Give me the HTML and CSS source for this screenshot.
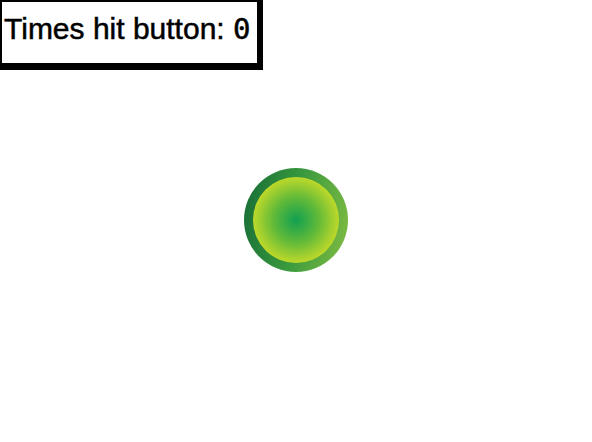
FILE: index.html
```html
<!DOCTYPE html>
<html>
<head>
<meta charset="utf-8">
<link rel="stylesheet" href="styles.css">
</head>
<body>
<div class="stage">
  <div class="counter">Times hit button: <span class="num">0</span></div>
  <div class="button"><div class="button-core"></div></div>
</div>
</body>
</html>
```
FILE: styles.css
```css
html, body {
  margin: 0;
  padding: 0;
  background: #ffffff;
}
.stage {
  width: 592px;
  height: 442px;
  display: flex;
  align-items: center;
  justify-content: center;
  padding-bottom: 2px;
  box-sizing: border-box;
}
.counter {
  position: absolute;
  top: 0;
  left: 0;
  width: 255px;
  border-style: solid;
  border-color: #000;
  border-width: 2px 6px 7px 2px;
  padding: 10px 0 17px 2px;
  box-sizing: content-box;
  font-family: "Liberation Sans", Arial, sans-serif;
  font-size: 30px;
  line-height: 34px;
  color: #000;
  white-space: nowrap;
  background: #fff;
  -webkit-text-stroke: 0.5px #000;
}
.counter {
  width: 253px;
}
.num {
  font-family: "DejaVu Sans Mono", monospace;
  font-size: 29px;
}
.button {
  width: 104px;
  height: 104px;
  border-radius: 50%;
  padding: 9px;
  box-sizing: border-box;
  background: linear-gradient(100deg, #166c36 0%, #3a9a3e 50%, #82bd42 100%);
}
.button-core {
  width: 100%;
  height: 100%;
  border-radius: 50%;
  background: radial-gradient(circle at 50% 50%, #12a050 0%, #5cb83a 35%, #bcd82a 70%, #e2e61e 100%);
}
```
